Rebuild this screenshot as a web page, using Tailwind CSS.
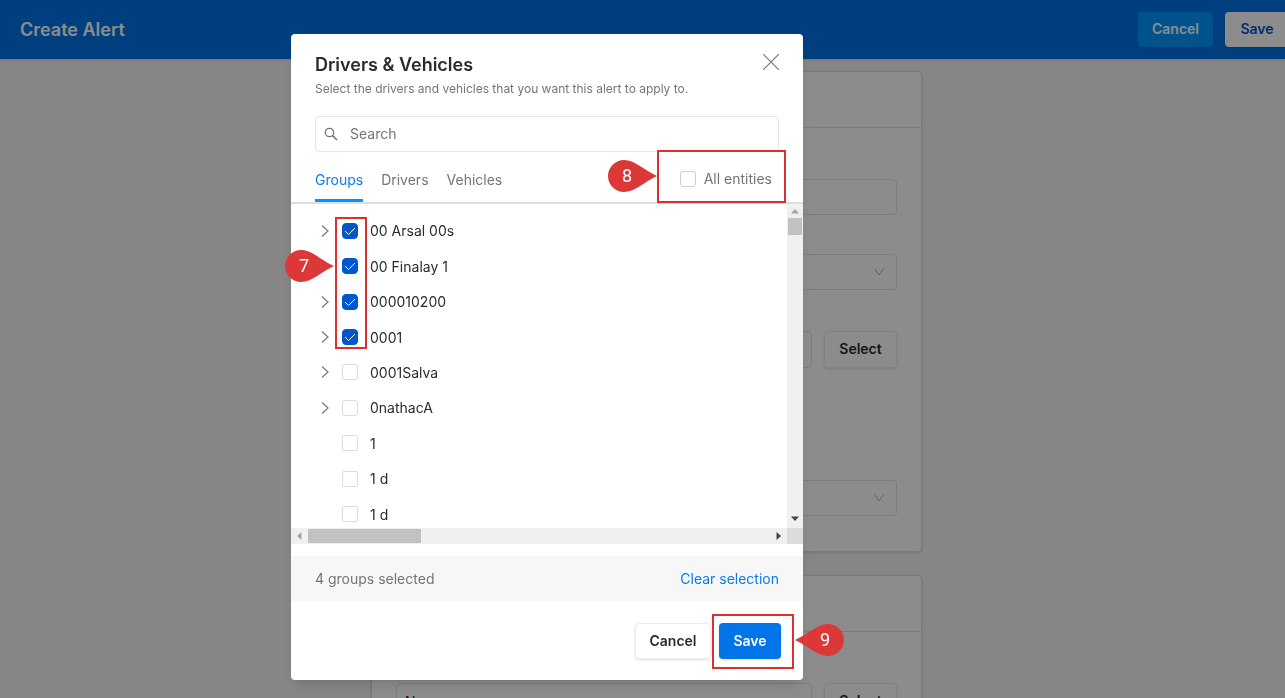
<!DOCTYPE html>
<html lang="en">
	<head>
		<meta charset="UTF-8" />
		<meta name="viewport" content="width=device-width, initial-scale=1.0" />
		<script src="https://cdn.jsdelivr.net/npm/@tailwindcss/browser@4"></script>
		<title>Create Alert</title>
	</head>
	<body
		class="h-screen overflow-hidden bg-[#f4f4f4] font-['Inter','Liberation_Sans',sans-serif] text-[14px] text-[#2b2b2b]"
	>
		<!-- header -->
		<header
			class="flex h-[59px] items-center justify-between bg-[#0074e8] pl-5 shadow"
		>
			<h1 class="text-[18px] font-semibold text-white">Create Alert</h1>
			<div class="flex gap-3">
				<button
					class="h-[35px] w-[75px] rounded bg-[#0096ff] pb-0.5 font-semibold text-white shadow-sm"
				>
					Cancel
				</button>
				<button
					class="h-[35px] w-[60px] rounded-l bg-white pb-0.5 pl-1 font-semibold text-[#0057cc] shadow-sm"
				>
					Save
				</button>
			</div>
		</header>

		<!-- page -->
		<main class="flex flex-col items-center gap-[23px] pt-3 pl-2">
			<section
				class="h-[481px] w-[551px] rounded border border-[#dcdcdc] bg-white shadow"
			>
				<div class="h-[56px] border-b border-[#dedede]"></div>
				<div class="flex flex-col px-6 pt-[51px]">
					<input
						type="text"
						aria-label="Alert name"
						class="h-[36px] rounded border border-[#e4e4e4]"
					/>
					<div class="mt-[39px] grid items-center">
						<select
							aria-label="Alert type"
							class="col-start-1 row-start-1 h-[36px] appearance-none rounded border border-[#e4e4e4]"
						></select>
						<svg
							class="pointer-events-none col-start-1 row-start-1 mr-3 h-3 w-3 justify-self-end text-[#b4b4b4]"
							viewBox="0 0 12 12"
							fill="none"
							stroke="currentColor"
						>
							<path d="M1.5 2.5L6 9l4.5-6.5" />
						</svg>
					</div>
					<div class="mt-[41px] flex gap-3">
						<input
							type="text"
							aria-label="Applies to"
							class="h-[37px] min-w-0 flex-1 rounded border border-[#e4e4e4]"
						/>
						<button
							class="h-[37px] w-[73px] rounded border border-[#ececec] pb-0.5 font-semibold shadow-sm"
						>
							Select
						</button>
					</div>
					<div class="mt-[112px] grid items-center">
						<select
							aria-label="Schedule"
							class="col-start-1 row-start-1 h-[36px] appearance-none rounded border border-[#e4e4e4]"
						></select>
						<svg
							class="pointer-events-none col-start-1 row-start-1 mr-3 h-3 w-3 justify-self-end text-[#b4b4b4]"
							viewBox="0 0 12 12"
							fill="none"
							stroke="currentColor"
						>
							<path d="M1.5 2.5L6 9l4.5-6.5" />
						</svg>
					</div>
				</div>
			</section>
			<section
				class="h-[240px] w-[551px] rounded border border-[#dcdcdc] bg-white shadow"
			>
				<div class="h-[56px] border-b border-[#dedede]"></div>
				<div class="flex gap-3 px-6 pt-[51px]">
					<input
						type="text"
						aria-label="Recipients"
						value="None"
						class="h-[37px] min-w-0 flex-1 rounded border border-[#e4e4e4] px-2"
					/>
					<button
						class="h-[37px] w-[73px] rounded border border-[#ececec] pb-0.5 font-semibold shadow-sm"
					>
						Select
					</button>
				</div>
			</section>
		</main>

		<!-- modal -->
		<div
			class="fixed inset-0 flex items-start justify-center bg-black/45 pt-[34px] pr-[191px]"
		>
			<div
				role="dialog"
				aria-labelledby="modal-title"
				class="relative w-[512px] rounded bg-white shadow-lg"
			>
				<div class="px-6 pt-5">
					<div class="flex items-start justify-between">
						<h2 id="modal-title" class="text-[18px] leading-[22px] font-semibold">
							Drivers &amp; Vehicles
						</h2>
						<button aria-label="Close">
							<svg
								class="h-4 w-4 text-[#777]"
								viewBox="0 0 16 16"
								fill="none"
								stroke="currentColor"
								stroke-width="1.2"
							>
								<path d="M0 0l16 16M16 0L0 16" />
							</svg>
						</button>
					</div>
					<p class="mt-[3px] text-[12px] leading-[20px] text-[#757575]">
						Select the drivers and vehicles that you want this alert to apply to.
					</p>
					<label
						class="mt-[17px] flex h-[36px] items-center gap-3 rounded border border-[#e5e5e5] px-2"
					>
						<svg
							class="h-[14px] w-[14px] text-[#757575]"
							viewBox="0 0 14 14"
							fill="none"
							stroke="currentColor"
							stroke-width="1.3"
						>
							<circle cx="5.5" cy="5.5" r="4.2" />
							<path d="M8.5 8.5l4.5 4.5" stroke-width="1.7" />
						</svg>
						<input
							type="text"
							aria-label="Search"
							placeholder="Search"
							class="min-w-0 flex-1 pb-0.5 outline-none placeholder:text-[#757575]"
						/>
					</label>
				</div>

				<!-- tabs -->
				<div
					class="mt-2 flex h-[44px] items-stretch justify-between border-b-2 border-[#dedede] px-6 text-[#757575]"
				>
					<div role="tablist" class="flex gap-[18px]">
						<button
							role="tab"
							aria-selected="true"
							class="border-b-3 border-[#0096ff] text-[#0a7cea]"
						>
							Groups
						</button>
						<button role="tab" class="border-b-3 border-transparent">Drivers</button>
						<button role="tab" class="border-b-3 border-transparent">Vehicles</button>
					</div>
					<label class="mr-[7px] flex items-center gap-2 pb-1">
						<input
							type="checkbox"
							class="h-4 w-4 appearance-none rounded-[3px] border border-[#cfcfcf]"
						/>
						<span class="pb-0.5">All entities</span>
					</label>
				</div>

				<!-- group list -->
				<div class="grid grid-cols-[1fr_16px] grid-rows-[324px_16px]">
					<div class="overflow-hidden">
						<ul id="groups" class="flex h-[328px] flex-col pt-[9px] pl-7"></ul>
					</div>
					<div class="flex flex-col items-center justify-between bg-[#f0f0f0]">
						<div class="flex flex-col items-center gap-1 pt-[5px]">
							<svg class="h-[5px] w-2" viewBox="0 0 8 5" fill="#a3a3a3">
								<path d="M0 4.5L4 0l4 4.5z" />
							</svg>
							<div class="h-[17px] w-[14px] bg-[#c1c1c1]"></div>
						</div>
						<svg class="mb-[7px] h-[5px] w-2" viewBox="0 0 8 5" fill="#444">
							<path d="M0 .5L4 5l4-4.5z" />
						</svg>
					</div>
					<div class="flex items-center justify-between bg-[#f0f0f0] pr-[6px] pl-[6px]">
						<div class="flex items-center gap-[6px]">
							<svg class="h-2 w-[5px]" viewBox="0 0 5 8" fill="#a3a3a3">
								<path d="M4.5 0L0 4l4.5 4z" />
							</svg>
							<div class="h-[14px] w-[113px] bg-[#c1c1c1]"></div>
						</div>
						<svg class="h-2 w-[5px]" viewBox="0 0 5 8" fill="#444">
							<path d="M.5 0L5 4 .5 8z" />
						</svg>
					</div>
					<div class="bg-[#dcdcdc]"></div>
				</div>

				<div
					class="mt-3 flex h-[45px] items-center justify-between bg-[#f7f7f7] px-6 text-[#757575]"
				>
					<span>4 groups selected</span>
					<button class="text-[#0a7cea]">Clear selection</button>
				</div>

				<div class="flex justify-end gap-2 pt-[22px] pr-[22px] pb-[21px]">
					<button
						class="h-[36px] w-[76px] rounded border border-[#ececec] pb-0.5 font-semibold shadow-sm"
					>
						Cancel
					</button>
					<button
						class="h-[36px] w-[62px] rounded bg-[#0074e8] pb-0.5 font-semibold text-white shadow-sm"
					>
						Save
					</button>
				</div>

				<!-- step callouts -->
				<div
					class="pointer-events-none absolute top-[183px] left-[44px] h-[132px] w-[32px] border-2 border-[#dc2f2f]"
				></div>
				<div
					class="pointer-events-none absolute top-[116px] left-[366px] h-[53px] w-[129px] border-2 border-[#dc2f2f]"
				></div>
				<div
					class="pointer-events-none absolute top-[580px] left-[421px] h-[55px] w-[82px] border-2 border-[#dc2f2f]"
				></div>
				<div class="pointer-events-none absolute top-[216px] left-[-6px] h-8 w-[49px]">
					<svg viewBox="0 0 49 32" fill="#dc3838">
						<path d="M16 0C27 0 34 9 49 16 34 23 27 32 16 32A16 16 0 0 1 16 0z" />
					</svg>
					<span
						class="absolute inset-y-0 left-0 w-[38px] text-center font-['Roboto',sans-serif] text-[18px] leading-8 text-white"
						>7</span
					>
				</div>
				<div class="pointer-events-none absolute top-[126px] left-[317px] h-8 w-[49px]">
					<svg viewBox="0 0 49 32" fill="#dc3838">
						<path d="M16 0C27 0 34 9 49 16 34 23 27 32 16 32A16 16 0 0 1 16 0z" />
					</svg>
					<span
						class="absolute inset-y-0 left-0 w-[38px] text-center font-['Roboto',sans-serif] text-[18px] leading-8 text-white"
						>8</span
					>
				</div>
				<div class="pointer-events-none absolute top-[590px] left-[504px] h-8 w-[49px]">
					<svg viewBox="0 0 49 32" fill="#dc3838">
						<path d="M33 0C22 0 15 9 0 16 15 23 22 32 33 32A16 16 0 0 0 33 0z" />
					</svg>
					<span
						class="absolute inset-y-0 right-0 w-[38px] text-center font-['Roboto',sans-serif] text-[18px] leading-8 text-white"
						>9</span
					>
				</div>
			</div>
		</div>

		<script>
			const groups = [
				{ name: "00 Arsal 00s", children: true, checked: true },
				{ name: "00 Finalay 1", children: false, checked: true },
				{ name: "000010200", children: true, checked: true },
				{ name: "0001", children: true, checked: true },
				{ name: "0001Salva", children: true, checked: false },
				{ name: "0nathacA", children: true, checked: false },
				{ name: "1", children: false, checked: false },
				{ name: "1 d", children: false, checked: false },
				{ name: "1 d", children: false, checked: false },
			];

			const arrow = (name) => `
				<button aria-label="Expand ${name}">
					<svg class="h-3 w-3 text-[#777]" viewBox="0 0 12 12" fill="none" stroke="currentColor" stroke-width="1.2">
						<path d="M3 .5L9 6l-6 5.500" />
					</svg>
				</button>`;

			document.getElementById("groups").innerHTML = groups
				.map(
					(group) => `
				<li class="flex flex-1 items-center gap-[11px]">
					<div class="flex w-3">${group.children ? arrow(group.name) : ""}</div>
					<label class="flex items-center gap-3">
						<span class="grid place-items-center">
							<input type="checkbox" ${group.checked ? "checked" : ""}
								class="peer col-start-1 row-start-1 h-4 w-4 appearance-none rounded-[2px] border border-[#dcdcdc] checked:rounded checked:border-[#0057cc] checked:bg-[#0057cc]" />
							<svg class="pointer-events-none invisible col-start-1 row-start-1 h-3 w-3 peer-checked:visible" viewBox="0 0 12 12" fill="none" stroke="#fff">
								<path d="M1 6l3.500 3.500L11 3" />
							</svg>
						</span>
						${group.name}
					</label>
				</li>`
				)
				.join("");
		</script>
	</body>
</html>
